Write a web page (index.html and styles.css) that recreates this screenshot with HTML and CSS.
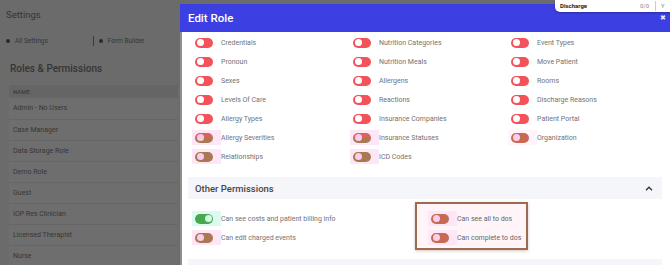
FILE: index.html
```html
<!DOCTYPE html>
<html lang="en">
<head>
    <meta charset="UTF-8">
    <title>Edit Role</title>
    <link rel="stylesheet" href="styles.css">
</head>
<body>
    <div class="settings">
        <h1 class="settings-title">Settings</h1>
        <div class="crumbs">
            <span class="crumb"><i class="dot"></i>All Settings</span>
            <span class="crumb crumb-sep"><i class="dot"></i>Form Builder</span>
        </div>
        <h2 class="roles-title">Roles &amp; Permissions</h2>
        <div class="roles-table">
            <div class="roles-head">NAME</div>
            <div class="roles-row">Admin - No Users</div>
            <div class="roles-row">Case Manager</div>
            <div class="roles-row">Data Storage Role</div>
            <div class="roles-row">Demo Role</div>
            <div class="roles-row">Guest</div>
            <div class="roles-row">IOP Res Clinician</div>
            <div class="roles-row">Licensed Therapist</div>
            <div class="roles-row">Nurse</div>
        </div>
    </div>

    <div class="modal">
        <div class="modal-head">
            <span>Edit Role</span>
            <span class="modal-close">&#10006;</span>
        </div>
        <div class="modal-body">
            <div class="perm-grid">
                <div class="perm"><span class="wrap"><i class="tg"></i></span>Credentials</div>
                <div class="perm"><span class="wrap"><i class="tg"></i></span>Nutrition Categories</div>
                <div class="perm"><span class="wrap"><i class="tg"></i></span>Event Types</div>

                <div class="perm"><span class="wrap"><i class="tg"></i></span>Pronoun</div>
                <div class="perm"><span class="wrap"><i class="tg"></i></span>Nutrition Meals</div>
                <div class="perm"><span class="wrap"><i class="tg"></i></span>Move Patient</div>

                <div class="perm"><span class="wrap"><i class="tg"></i></span>Sexes</div>
                <div class="perm"><span class="wrap"><i class="tg"></i></span>Allergens</div>
                <div class="perm"><span class="wrap"><i class="tg"></i></span>Rooms</div>

                <div class="perm"><span class="wrap"><i class="tg"></i></span>Levels Of Care</div>
                <div class="perm"><span class="wrap"><i class="tg"></i></span>Reactions</div>
                <div class="perm"><span class="wrap"><i class="tg"></i></span>Discharge Reasons</div>

                <div class="perm"><span class="wrap"><i class="tg"></i></span>Allergy Types</div>
                <div class="perm"><span class="wrap"><i class="tg"></i></span>Insurance Companies</div>
                <div class="perm"><span class="wrap"><i class="tg"></i></span>Patient Portal</div>

                <div class="perm"><span class="wrap hl"><i class="tg tg-mix"></i></span>Allergy Severities</div>
                <div class="perm"><span class="wrap hl"><i class="tg tg-mix"></i></span>Insurance Statuses</div>
                <div class="perm"><span class="wrap hl-soft"><i class="tg tg-rust"></i></span>Organization</div>

                <div class="perm"><span class="wrap hl"><i class="tg tg-brown"></i></span>Relationships</div>
                <div class="perm"><span class="wrap hl"><i class="tg tg-brown"></i></span>ICD Codes</div>
            </div>

            <div class="section-head">
                <span>Other Permissions</span>
                <svg class="chevron" width="8" height="5" viewBox="0 0 8 5">
                    <path d="M1 4.2 L4 1.2 L7 4.2" fill="none" stroke="#333" stroke-width="1.3"/>
                </svg>
            </div>

            <div class="other">
                <div class="other-col">
                    <div class="perm"><span class="wrap hl-green"><i class="tg tg-on"></i></span>Can see costs and patient billing info</div>
                    <div class="perm"><span class="wrap hl"><i class="tg tg-brown"></i></span>Can edit charged events</div>
                </div>
                <div class="todo-box">
                    <div class="perm"><span class="wrap hl"><i class="tg tg-rust"></i></span>Can see all to dos</div>
                    <div class="perm"><span class="wrap hl"><i class="tg tg-rust"></i></span>Can complete to dos</div>
                </div>
            </div>

            <div class="section-head section-next"></div>
        </div>
    </div>

    <div class="popup">
        <b>Discharge</b>
        <span class="popup-count">0/0</span>
        <span class="popup-sep"></span>
        <span class="popup-more">Y</span>
    </div>
</body>
</html>
```

FILE: styles.css
```css
* {
    box-sizing: border-box;
}
body {
    margin: 0;
    height: 265px;
    overflow: hidden;
    background-color: #6b6b6b;
    font-family: Roboto, "Liberation Sans", sans-serif;
    color: #333;
}

/* page behind the overlay */
.settings {
    width: 180px;
}
.settings-title {
    margin: 0;
    padding: 9px 6px 0;
    font-size: 9.5px;
    line-height: 12px;
    font-weight: 400;
    color: #353535;
}
.crumbs {
    display: flex;
    margin-top: 15px;
    padding-left: 6px;
    font-size: 6.5px;
    line-height: 10px;
    color: #363636;
}
.crumb {
    display: flex;
    align-items: center;
    width: 97px;
}
.crumb-sep {
    border-left: 1px solid #3a3a3a;
    padding-left: 5px;
}
.dot {
    width: 4px;
    height: 4px;
    margin-right: 5px;
    border-radius: 50%;
    background-color: #2a2a2a;
}
.roles-title {
    margin: 16px 0 0;
    padding-left: 10px;
    font-size: 10px;
    line-height: 14px;
    font-weight: 500;
    color: #353535;
}
.roles-table {
    margin: 9px 0 0 9px;
    width: 169px;
    background-color: #6e6e6e;
}
.roles-head {
    height: 13px;
    padding-left: 4px;
    font-size: 6px;
    line-height: 14px;
    background-color: #656565;
    color: #333;
}
.roles-row {
    height: 21px;
    padding-left: 4px;
    font-size: 7px;
    line-height: 21px;
    color: #363636;
}
.roles-row + .roles-row {
    border-top: 1px solid #666;
}

/* modal */
.modal {
    position: absolute;
    left: 180px;
    top: 4px;
    right: 0;
    bottom: 0;
    display: flex;
    flex-direction: column;
    overflow: hidden;
}
.modal-head {
    flex-shrink: 0;
    display: flex;
    justify-content: space-between;
    align-items: center;
    height: 28px;
    padding: 0 4px 0 8px;
    background-color: #3c3fe2;
    color: #fff;
    font-size: 11.5px;
    font-weight: 500;
}
.modal-close {
    font-size: 7px;
    color: #e6e6ff;
}
.modal-body {
    flex: 1 0 auto;
    background-color: #fff;
    border-left: 2px solid #8f8f8f;
}
.perm-grid {
    display: grid;
    grid-template-columns: repeat(3, 158px);
    padding: 1px 0 0 10px;
}
.perm {
    display: flex;
    align-items: center;
    height: 19px;
    font-size: 7px;
    color: #737373;
    white-space: nowrap;
}
.wrap {
    display: flex;
    align-items: center;
    width: 29px;
    height: 15px;
    padding-left: 3px;
}
.hl {
    background-color: #fde6f6;
}
.hl-soft {
    background-color: #fff4fb;
}
.hl-green {
    background-color: #dcfaf0;
}

/* toggles */
.tg {
    position: relative;
    width: 18px;
    height: 10px;
    border-radius: 5px;
    background-color: #f4525a;
}
.tg::after {
    content: "";
    position: absolute;
    top: 1.5px;
    left: 1.5px;
    width: 7px;
    height: 7px;
    border-radius: 50%;
    background-color: #fff;
}
.tg-mix {
    background: linear-gradient(#e0605a 0, #e0605a 30%, #a97a52 60%);
}
.tg-mix::after,
.tg-brown::after,
.tg-rust::after {
    background-color: #f9cdee;
}
.tg-brown {
    background-color: #a97a52;
}
.tg-rust {
    background-color: #c86a52;
}
.tg-on {
    background-color: #47a84e;
}
.tg-on::after {
    left: auto;
    right: 1.5px;
    background-color: #d9f7ea;
}

/* other permissions */
.section-head {
    display: flex;
    justify-content: space-between;
    align-items: center;
    height: 22px;
    margin: 11px 8px 0 6px;
    padding: 0 9px 0 7px;
    background-color: #f4f6fa;
    font-size: 9.5px;
    font-weight: 500;
    color: #474747;
}
.section-next {
    margin-top: 9px;
    height: 20px;
}
.other {
    display: flex;
    align-items: flex-start;
    margin-top: 3px;
    padding-left: 10px;
}
.other-col {
    width: 223px;
    padding-top: 7px;
}
.todo-box {
    width: 113px;
    padding: 5px 0 1px 11px;
    border: 2px solid #9c6b50;
    background-color: #fff5f9;
    box-shadow: 0 1px 3px rgba(150, 90, 90, .35);
}
.todo-box .perm {
    color: #666;
}

/* notification popup at the top right */
.popup {
    position: absolute;
    top: 0;
    left: 555px;
    right: 0;
    height: 12px;
    display: flex;
    align-items: center;
    padding-left: 5px;
    background-color: #fff;
    border-bottom-left-radius: 5px;
    box-shadow: 0 1px 2px rgba(0, 0, 0, .3);
    font-size: 6px;
    line-height: 8px;
}
.popup b {
    width: 80px;
    color: #222;
}
.popup-count {
    width: 15px;
    color: #888;
}
.popup-sep {
    width: 1px;
    height: 10px;
    background-color: #ccc;
}
.popup-more {
    margin-left: 5px;
    color: #888;
}
```
